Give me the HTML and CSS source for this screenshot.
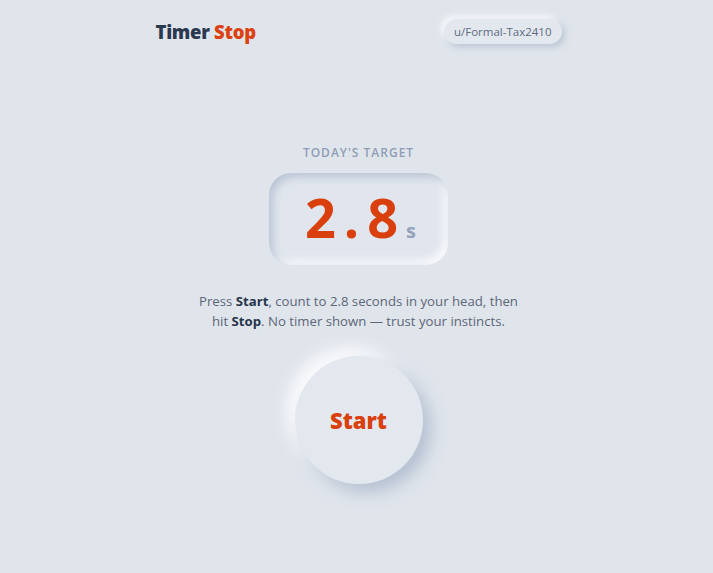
FILE: index.html
```html
<!DOCTYPE html>
<html lang="en">
<head>
<meta charset="utf-8">
<title>Timer Stop</title>
<link rel="stylesheet" href="styles.css">
</head>
<body>
<div class="app">
  <header class="topbar">
    <div class="logo">Timer <span class="logo-accent">Stop</span></div>
    <div class="user-pill">u/Formal-Tax2410</div>
  </header>
  <main class="game">
    <div class="target-label">TODAY'S TARGET</div>
    <div class="target-box">
      <span class="target-num">2.8</span><span class="target-unit">s</span>
    </div>
    <p class="instructions">Press <b>Start</b>, count to 2.8 seconds in your head, then<br>hit <b>Stop</b>. No timer shown — trust your instincts.</p>
    <button class="start-btn">Start</button>
  </main>
</div>
</body>
</html>
```
FILE: styles.css
```css
* { box-sizing: border-box; }
html, body { margin: 0; padding: 0; }
body {
  background: #e0e5ec;
  font-family: "Open Sans", "Noto Sans", sans-serif;
  color: #5b6577;
  min-height: 573px;
}
.app {
  width: 410px;
  margin: 0 auto;
  padding-left: 4px;
}
.topbar {
  display: flex;
  justify-content: space-between;
  align-items: center;
  padding-top: 18px;
  height: 44px;
}
.logo {
  font-family: "Open Sans", sans-serif;
  font-weight: 800;
  font-size: 18.5px;
  color: #2b3950;
  letter-spacing: -0.3px;
}
.logo-accent { color: #dc420f; }
.user-pill {
  font-size: 11.5px;
  color: #5e6a80;
  padding: 3px 10px;
  border-radius: 14px;
  background: #e3e8ef;
  box-shadow: 3px 3px 6px rgba(163, 177, 198, 0.6), -3px -3px 6px rgba(255, 255, 255, 0.8);
  height: 25px;
  line-height: 19px;
}
.game {
  display: flex;
  flex-direction: column;
  align-items: center;
  padding-top: 101px;
}
.target-label {
  font-size: 12px;
  font-weight: 600;
  letter-spacing: 1px;
  color: #8f9db5;
  line-height: 16px;
}
.target-box {
  margin-top: 12px;
  width: 179px;
  height: 92px;
  border-radius: 22px;
  display: flex;
  justify-content: center;
  align-items: baseline;
  padding-top: 2px;
  background: #e1e6ee;
  box-shadow: inset 4px 4px 8px rgba(163, 177, 198, 0.65), inset -4px -4px 8px rgba(255, 255, 255, 0.9);
}
.target-num {
  font-size: 54px;
  font-weight: 700;
  color: #d9400d;
  letter-spacing: 8px;
  line-height: 84px;
  padding-left: 4px;
}
.target-unit {
  font-size: 20px;
  font-weight: 700;
  color: #95a2b9;
}
.instructions {
  margin: 26px 0 0;
  font-size: 13.2px;
  line-height: 20px;
  text-align: center;
  color: #5d6679;
}
.instructions b { color: #26344b; font-weight: 700; }
.start-btn {
  margin-top: 25px;
  width: 128px;
  height: 128px;
  border-radius: 50%;
  border: none;
  background: #e3e8ef;
  box-shadow: 8px 8px 16px rgba(163, 177, 198, 0.7), -8px -8px 16px rgba(255, 255, 255, 0.9);
  font-family: "Open Sans", sans-serif;
  font-weight: 800;
  font-size: 22px;
  color: #d9400d;
  cursor: pointer;
}
```
